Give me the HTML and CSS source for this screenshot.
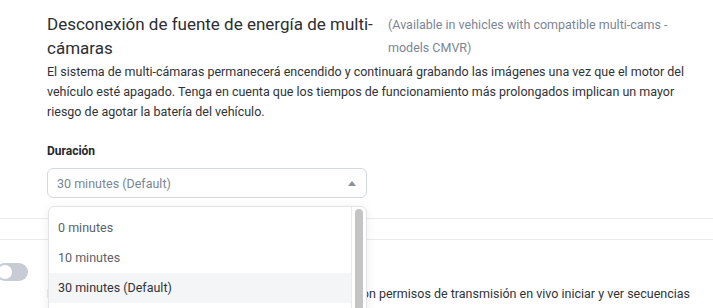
FILE: index.html
```html
<!DOCTYPE html>
<html lang="es">
<head>
    <meta charset="UTF-8">
    <meta name="viewport" content="width=device-width, initial-scale=1.0">
    <title>Multi-cámaras</title>
    <link rel="stylesheet" href="styles.css">
</head>
<body>

    <!-- Power disconnect setting -->
    <section class="setting">
        <div class="setting-head">
            <h3 class="setting-title">Desconexión de fuente de energía de multi-cámaras</h3>
            <p class="setting-note">(Available in vehicles with compatible multi-cams - models CMVR)</p>
        </div>
        <p class="setting-desc">El sistema de multi-cámaras permanecerá encendido y continuará grabando las imágenes una vez que el motor del vehículo esté apagado. Tenga en cuenta que los tiempos de funcionamiento más prolongados implican un mayor riesgo de agotar la batería del vehículo.</p>

        <label class="field-label">Duración</label>
        <div class="select-wrap">
            <div class="select-box">
                <span>30 minutes (Default)</span>
                <span class="caret"></span>
            </div>

            <!-- Open menu -->
            <div class="select-menu">
                <ul class="options">
                    <li>0 minutes</li>
                    <li>10 minutes</li>
                    <li class="active">30 minutes (Default)</li>
                    <li>60 minutes</li>
                </ul>
                <div class="scroll-track">
                    <div class="scroll-thumb"></div>
                </div>
            </div>
        </div>
    </section>

    <!-- Live stream setting -->
    <section class="setting setting-next">
        <div class="toggle-row">
            <span class="toggle"><span class="knob"></span></span>
        </div>
        <p class="setting-desc">Permite que los administradores de flota y los usuarios con permisos de transmisión en vivo iniciar y ver secuencias</p>
    </section>

</body>
</html>
```

FILE: styles.css
```css
/* Reset */
* {
    margin: 0;
    padding: 0;
    box-sizing: border-box;
}

body {
    font-family: 'Roboto', 'Noto Sans', sans-serif;
    background: #ffffff;
    color: #2f3337;
    width: 713px;
    height: 308px;
    overflow: hidden;
}

/* Setting block */
.setting {
    padding: 12px 20px 20px 47px;
    border-bottom: 1px solid #e9eaec;
}

.setting-head {
    display: flex;
    gap: 11px;
}

.setting-title {
    width: 330px;
    flex-shrink: 0;
    font-size: 17px;
    font-weight: 400;
    line-height: 24px;
    color: #2b2e33;
}

.setting-note {
    width: 300px;
    font-size: 12.5px;
    line-height: 23px;
    color: #7b8595;
    padding-top: 1px;
}

.setting-desc {
    font-size: 12.5px;
    line-height: 20px;
    color: #2f3337;
    margin-top: 2px;
    max-width: 655px;
}

.field-label {
    display: block;
    font-size: 12px;
    font-weight: 700;
    color: #24272b;
    margin-top: 22px;
}

/* Select */
.select-wrap {
    position: relative;
    width: 320px;
    margin-top: 10px;
}

.select-box {
    height: 30px;
    border: 1px solid #d5d9de;
    border-radius: 6px;
    display: flex;
    align-items: center;
    justify-content: space-between;
    padding: 0 10px 0 9px;
    font-size: 12.5px;
    color: #7b8595;
}

.caret {
    width: 0;
    height: 0;
    border-left: 4px solid transparent;
    border-right: 4px solid transparent;
    border-bottom: 5px solid #8b9099;
}

.select-menu {
    position: absolute;
    top: 38px;
    left: 1px;
    width: 319px;
    height: 120px;
    background: #ffffff;
    border: 1px solid #e2e4e7;
    border-radius: 6px;
    box-shadow: 0 2px 10px rgba(0, 0, 0, 0.08);
    display: flex;
    overflow: hidden;
    z-index: 5;
}

.options {
    list-style: none;
    flex: 1;
    padding-top: 6px;
}

.options li {
    height: 30px;
    line-height: 30px;
    padding-left: 9px;
    font-size: 12.5px;
    color: #5b5f66;
}

.options li.active {
    background: #f4f5f7;
    color: #2f3337;
}

.scroll-track {
    width: 15px;
    border-left: 1px solid #ebebeb;
    padding: 2px 3px;
}

.scroll-thumb {
    height: 150px;
    background: #c4c4c4;
    border-radius: 4px;
}

/* Next setting */
.setting-next {
    margin-top: 20px;
    border-top: 1px solid #e9eaec;
    border-bottom: none;
    padding-top: 23px;
    padding-left: 47px;
}

.toggle-row {
    position: relative;
    height: 19px;
}

.toggle {
    position: absolute;
    left: -51px;
    top: 0;
    width: 32px;
    height: 18px;
    border-radius: 9px;
    background: #c7ccd4;
}

.knob {
    position: absolute;
    left: 2px;
    top: 2px;
    width: 14px;
    height: 14px;
    border-radius: 50%;
    background: #ffffff;
}

.setting-next .setting-desc {
    margin-top: 2px;
}
```
